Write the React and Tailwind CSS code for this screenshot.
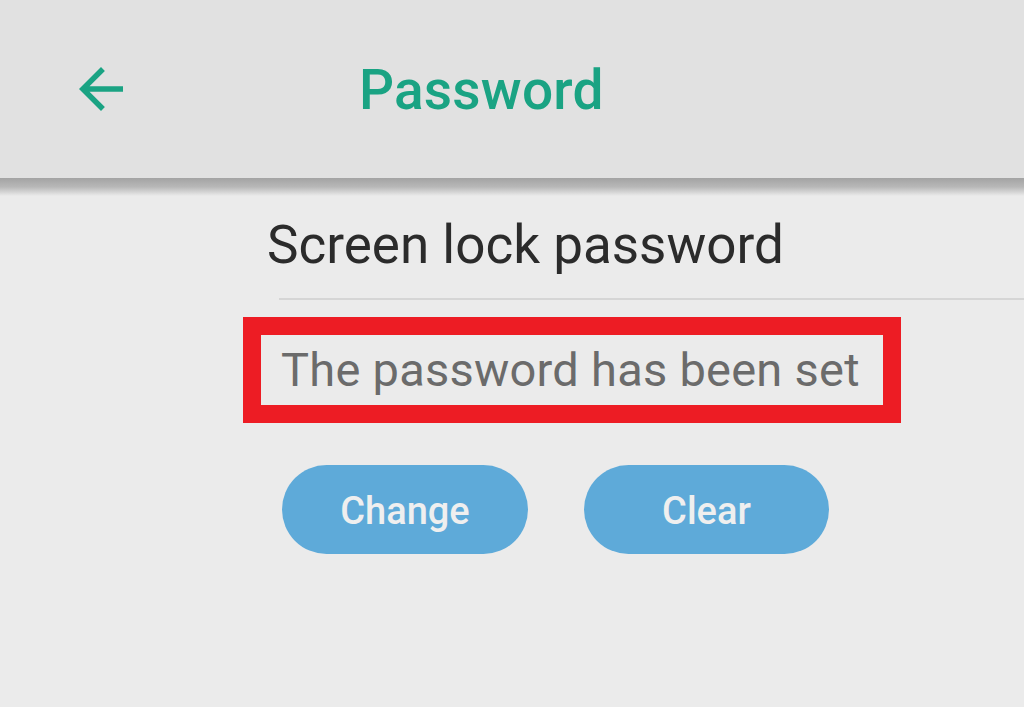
import React from "react";

export default function App() {
  return (
    <div
      className="w-[1024px] h-[707px] bg-[#ebebeb] flex flex-col overflow-hidden"
      style={{ fontFamily: "Roboto, 'Noto Sans', sans-serif" }}
    >
      <header className="h-[178px] bg-[#e1e1e1] flex items-center shrink-0">
        <svg
          viewBox="0 0 24 24"
          className="w-[66px] h-[66px] ml-[68px] shrink-0"
          fill="#1aa383"
        >
          <path d="M20 11H7.83l5.59-5.59L12 4l-8 8 8 8 1.41-1.41L7.83 13H20v-2z" />
        </svg>
        <h1 className="ml-[225px] mt-[2px] text-[55px] font-medium text-[#1aa383] leading-none tracking-[0.2px]">
          Password
        </h1>
      </header>
      <div className="h-[18px] shrink-0 bg-gradient-to-b from-[#a3a3a3] via-[#b8b8b8] to-[#ebebeb]" />
      <div className="flex flex-col">
        <div className="mt-[17px] ml-[267px] text-[53px] leading-[64px] text-[#2b2b2b]">
          Screen lock password
        </div>
        <div className="mt-[21px] ml-[279px] h-[2px] bg-[#d5d5d5]" />
        <div className="mt-[17px] ml-[243px] w-[658px] h-[106px] border-[18px] border-[#ed1c24] flex items-center">
          <span className="pl-[20px] text-[47px] leading-[70px] tracking-[0.25px] text-[#6b6b6b]">
            The password has been set
          </span>
        </div>
        <div className="mt-[42px] ml-[282px] flex gap-[56px]">
          <button className="w-[246px] h-[89px] pt-[3px] rounded-full bg-[#5eaad9] text-[#efefef] text-[38px] font-medium">
            Change
          </button>
          <button className="w-[245px] h-[89px] pt-[3px] rounded-full bg-[#5eaad9] text-[#efefef] text-[38px] font-medium">
            Clear
          </button>
        </div>
      </div>
    </div>
  );
}
